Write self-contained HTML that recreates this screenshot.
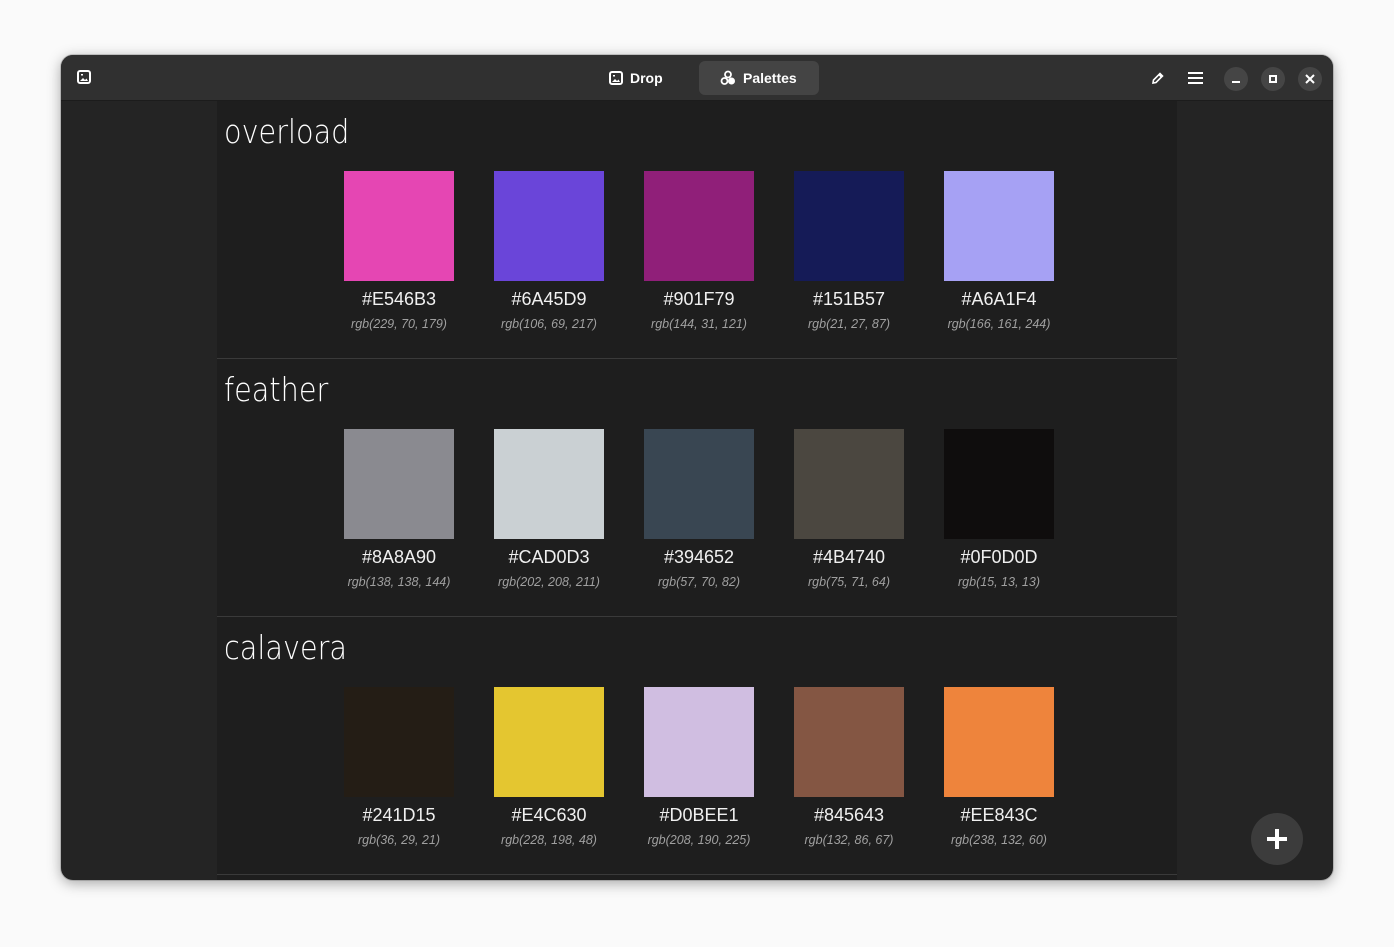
<!DOCTYPE html>
<html><head><meta charset="utf-8"><style>
*{margin:0;padding:0;box-sizing:border-box}
body{width:1394px;height:947px;background:#fafafa;position:relative;overflow:hidden;font-family:"Liberation Sans","DejaVu Sans",sans-serif}
.win{position:absolute;left:61px;top:55px;width:1272px;height:825px;background:#242424;border-radius:12px;overflow:hidden;box-shadow:0 3px 14px rgba(0,0,0,.35),0 0 0 1px rgba(0,0,0,.15)}
.hdr{position:absolute;left:0;top:0;width:100%;height:46px;background:#303030;border-bottom:1px solid #1c1c1c}
.col{position:absolute;left:156px;top:46px;width:960px;height:779px;background:#1e1e1e}
.sec{position:absolute;left:0;width:960px;height:258px;border-bottom:1px solid #3a3a3a}
.title{position:absolute;left:7px;top:11px;font-size:33px;color:#fff;font-weight:200;font-family:"DejaVu Sans","Liberation Sans",sans-serif;white-space:nowrap;transform:scaleX(.87);transform-origin:left}
.sw{position:absolute;top:70px;width:110px;text-align:center}
.sw .c{width:110px;height:110px}
.sw .h,.sw .r{white-space:nowrap;margin-left:-40px;margin-right:-40px}
.sw .h{color:#f0f0f0;font-size:18px;margin-top:8px;font-family:"Liberation Sans",sans-serif}
.sw .r{color:#a0a0a0;font-size:12.5px;font-style:italic;margin-top:7px;font-family:"Liberation Sans",sans-serif}
.tab{position:absolute;top:6px;height:34px;border-radius:6px;color:#fff;font-weight:bold;font-size:14px;display:flex;align-items:center;gap:7px}
.cb{position:absolute;top:12px;width:24px;height:24px;border-radius:50%;background:#454545}
.fab{position:absolute;left:1190px;top:758px;width:52px;height:52px;border-radius:50%;background:#3c3c3c}
</style></head><body>
<div class="win">
 <div class="hdr">
  <svg style="position:absolute;left:16px;top:15px" width="14" height="14" viewBox="0 0 14 14"><rect x="1" y="1" width="12" height="12" rx="2" fill="none" stroke="#fff" stroke-width="2"/><path d="M3 11 L6 8 L8 10 L9.5 8.5 L11 11Z" fill="#fff"/><rect x="4" y="4" width="2" height="1.5" fill="#fff"/></svg>
  <div class="tab" style="left:548px;width:60px"><svg width="14" height="14" viewBox="0 0 14 14"><rect x="1" y="1" width="12" height="12" rx="2" fill="none" stroke="#fff" stroke-width="2"/><path d="M3 11 L6 8 L8 10 L9.5 8.5 L11 11Z" fill="#fff"/><rect x="4" y="4" width="2" height="1.5" fill="#fff"/></svg>Drop</div>
  <div class="tab" style="left:638px;width:120px;background:#444;padding-left:21px"><svg width="16" height="16" viewBox="0 0 16 16"><circle cx="8" cy="4.5" r="3" fill="none" stroke="#fff" stroke-width="1.8"/><circle cx="4.5" cy="11" r="3" fill="none" stroke="#fff" stroke-width="1.8"/><circle cx="11.5" cy="11" r="3.5" fill="#fff"/></svg>Palettes</div>
  <svg style="position:absolute;left:1090px;top:16px" width="14" height="14" viewBox="0 0 14 14"><path d="M2 12 L2.5 9 L9 2.5 L11.5 5 L5 11.5Z M8 3.5 L10.5 6" fill="none" stroke="#fff" stroke-width="1.6"/></svg>
  <svg style="position:absolute;left:1127px;top:16px" width="15" height="14" viewBox="0 0 15 14"><rect x="0" y="1" width="15" height="2" fill="#fff"/><rect x="0" y="6" width="15" height="2" fill="#fff"/><rect x="0" y="11" width="15" height="2" fill="#fff"/></svg>
  <div class="cb" style="left:1163px"><div style="position:absolute;left:8px;top:14px;width:8px;height:2px;background:#fff"></div></div>
  <div class="cb" style="left:1200px"><div style="position:absolute;left:8px;top:8px;width:8px;height:8px;border:2px solid #fff"></div></div>
  <div class="cb" style="left:1237px"><svg style="position:absolute;left:7px;top:7px" width="10" height="10" viewBox="0 0 10 10"><path d="M1 1L9 9M9 1L1 9" stroke="#fff" stroke-width="2"/></svg></div>
 </div>
 <div class="col">
  <div class="sec" style="top:0">
   <div class="title">overload</div>
   <div class="sw" style="left:127px"><div class="c" style="background:#E546B3"></div><div class="h">#E546B3</div><div class="r">rgb(229, 70, 179)</div></div>
   <div class="sw" style="left:277px"><div class="c" style="background:#6A45D9"></div><div class="h">#6A45D9</div><div class="r">rgb(106, 69, 217)</div></div>
   <div class="sw" style="left:427px"><div class="c" style="background:#901F79"></div><div class="h">#901F79</div><div class="r">rgb(144, 31, 121)</div></div>
   <div class="sw" style="left:577px"><div class="c" style="background:#151B57"></div><div class="h">#151B57</div><div class="r">rgb(21, 27, 87)</div></div>
   <div class="sw" style="left:727px"><div class="c" style="background:#A6A1F4"></div><div class="h">#A6A1F4</div><div class="r">rgb(166, 161, 244)</div></div>
  </div>
  <div class="sec" style="top:258px">
   <div class="title">feather</div>
   <div class="sw" style="left:127px"><div class="c" style="background:#8A8A90"></div><div class="h">#8A8A90</div><div class="r">rgb(138, 138, 144)</div></div>
   <div class="sw" style="left:277px"><div class="c" style="background:#CAD0D3"></div><div class="h">#CAD0D3</div><div class="r">rgb(202, 208, 211)</div></div>
   <div class="sw" style="left:427px"><div class="c" style="background:#394652"></div><div class="h">#394652</div><div class="r">rgb(57, 70, 82)</div></div>
   <div class="sw" style="left:577px"><div class="c" style="background:#4B4740"></div><div class="h">#4B4740</div><div class="r">rgb(75, 71, 64)</div></div>
   <div class="sw" style="left:727px"><div class="c" style="background:#0F0D0D"></div><div class="h">#0F0D0D</div><div class="r">rgb(15, 13, 13)</div></div>
  </div>
  <div class="sec" style="top:516px">
   <div class="title">calavera</div>
   <div class="sw" style="left:127px"><div class="c" style="background:#241D15"></div><div class="h">#241D15</div><div class="r">rgb(36, 29, 21)</div></div>
   <div class="sw" style="left:277px"><div class="c" style="background:#E4C630"></div><div class="h">#E4C630</div><div class="r">rgb(228, 198, 48)</div></div>
   <div class="sw" style="left:427px"><div class="c" style="background:#D0BEE1"></div><div class="h">#D0BEE1</div><div class="r">rgb(208, 190, 225)</div></div>
   <div class="sw" style="left:577px"><div class="c" style="background:#845643"></div><div class="h">#845643</div><div class="r">rgb(132, 86, 67)</div></div>
   <div class="sw" style="left:727px"><div class="c" style="background:#EE843C"></div><div class="h">#EE843C</div><div class="r">rgb(238, 132, 60)</div></div>
  </div>
 </div>
 <div class="fab"><div style="position:absolute;left:16px;top:24px;width:20px;height:4px;background:#fff"></div><div style="position:absolute;left:24px;top:16px;width:4px;height:20px;background:#fff"></div></div>
</div>
</body></html>
